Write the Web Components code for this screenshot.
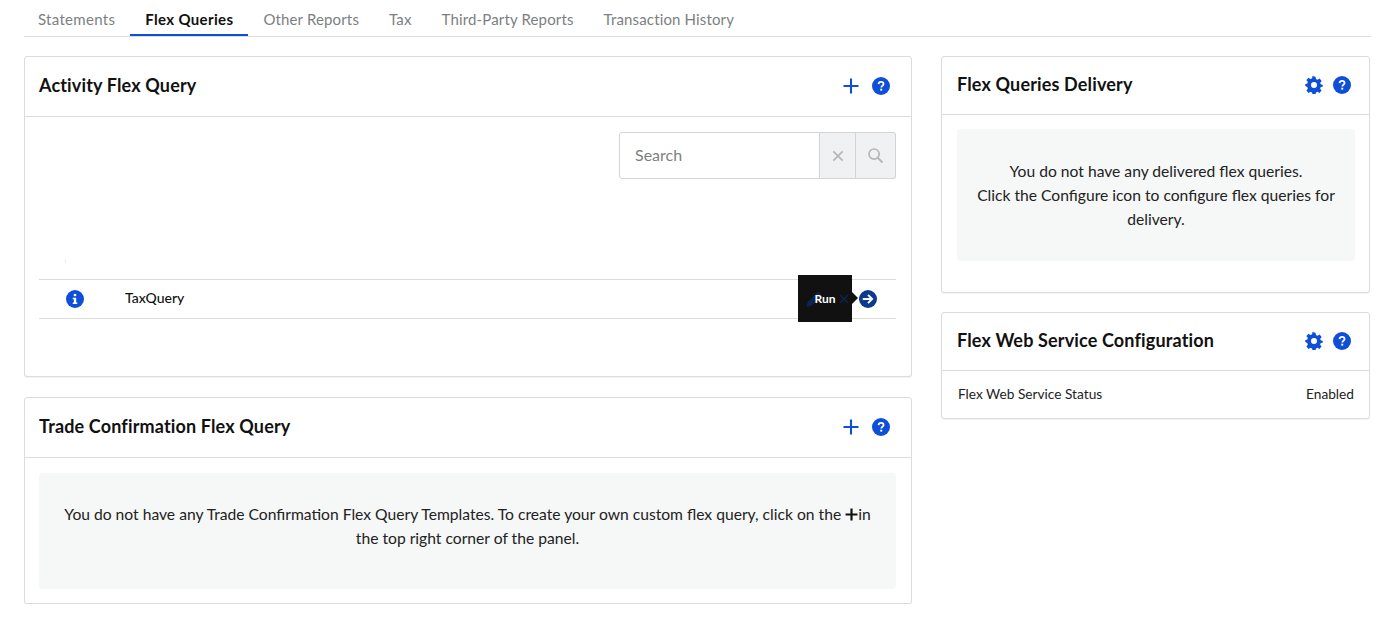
<!DOCTYPE html>
<html lang="en">
<head>
<meta charset="utf-8">
<title>Flex Queries</title>
<style>
  html, body { margin: 0; background: #fff; }
  body { font-family: Lato, "Open Sans", sans-serif; color: #1c1c1c; }
</style>
</head>
<body>
<fq-page>
  <fq-tabs slot="tabs">
    <fq-tab>Statements</fq-tab>
    <fq-tab active>Flex Queries</fq-tab>
    <fq-tab>Other Reports</fq-tab>
    <fq-tab>Tax</fq-tab>
    <fq-tab>Third-Party Reports</fq-tab>
    <fq-tab>Transaction History</fq-tab>
  </fq-tabs>

  <fq-card slot="left" heading="Activity Flex Query" action="plus" style="height:321px">
    <fq-search></fq-search>
    <fq-row name="TaxQuery"></fq-row>
  </fq-card>
  <fq-card slot="left" heading="Trade Confirmation Flex Query" action="plus" style="height:207px">
    <fq-notice style="height:116px;padding-bottom:10px">You do not have any Trade Confirmation Flex Query Templates. To create your own custom flex query, click on the <fq-icon name="plusbold" size="13" style="color:#111;vertical-align:-1px"></fq-icon><span>in</span> the top right corner of the panel.</fq-notice>
  </fq-card>

  <fq-card slot="right" heading="Flex Queries Delivery" action="gear" compact style="height:237px">
    <fq-notice style="height:132px;padding:0 18px;margin-top:-1px">You do not have any delivered flex queries.<br>Click the Configure icon to configure flex queries for delivery.</fq-notice>
  </fq-card>
  <fq-card slot="right" heading="Flex Web Service Configuration" action="gear" compact flush style="height:107px">
    <fq-status label="Flex Web Service Status" value="Enabled"></fq-status>
  </fq-card>
</fq-page>

<script>
const ICONS = {
  plus: '<path d="M12 2v20M2 12h20" fill="none" stroke="currentColor" stroke-width="2.8"/>',
  plusbold: '<path d="M12 1v22M1 12h22" fill="none" stroke="currentColor" stroke-width="4"/>',
  help: '<circle cx="12" cy="12" r="12" fill="currentColor"/><path d="M8.7 9.4c.2-2 1.6-3 3.4-3 1.9 0 3.3 1.1 3.3 2.8 0 2.5-3 2.5-3 4.8" fill="none" stroke="#fff" stroke-width="2.3"/><rect x="11" y="15.6" width="2.6" height="2.6" fill="#fff"/>',
  info: '<circle cx="12" cy="12" r="12" fill="currentColor"/><rect x="10.4" y="5.2" width="3.2" height="3" fill="#fff"/><path d="M9 10.2h4.6v6.6H15v2H9v-2h1.5v-4.6H9z" fill="#fff"/>',
  gear: '<path fill="currentColor" fill-rule="evenodd" d="M14 1l.6 3 2.2.9 2.6-1.7 2.9 3.5-2 2.2.6 2.2 2.9 1-.1 1.8-2.9 1-.6 2.1 1.9 2.4-2.9 3.3-2.5-1.7-2.1.9-.6 3h-4l-.6-3-2.1-.9-2.6 1.7-2.8-3.4 1.9-2.3-.6-2.1L.3 13l-.1-2 2.9-1 .6-2.2-1.9-2.3 2.8-3.3 2.6 1.7 2.2-.9.6-3zM12 8a4 4 0 1 0 0 8 4 4 0 0 0 0-8z"/>',
  close: '<path d="M4 4l16 16M20 4L4 20" fill="none" stroke="currentColor" stroke-width="2.8"/>',
  search: '<circle cx="10" cy="10" r="7.2" fill="none" stroke="currentColor" stroke-width="2.4"/><path d="M15.2 15.2l6.6 6.6" fill="none" stroke="currentColor" stroke-width="2.8"/>',
  pencil: '<path fill="currentColor" d="M2 23l1.5-7L16 3.5a2 2 0 0 1 3 0l2 2a2 2 0 0 1 0 3L8.5 21z"/>',
  run: '<circle cx="12" cy="12" r="12" fill="currentColor"/><path d="M5 12h12M12 6.5l5.5 5.5-5.5 5.5" fill="none" stroke="#fff" stroke-width="2.6"/>'
};

class FqIcon extends HTMLElement {
  connectedCallback() {
    const size = this.getAttribute('size') || 18;
    this.attachShadow({ mode: 'open' }).innerHTML = `
      <style>
        :host { display: inline-block; width: ${size}px; height: ${size}px; line-height: 0; }
        svg { width: 100%; height: 100%; display: block; }
      </style>
      <svg viewBox="0 0 24 24">${ICONS[this.getAttribute('name')]}</svg>`;
  }
}

class FqPage extends HTMLElement {
  constructor() {
    super();
    this.attachShadow({ mode: 'open' }).innerHTML = `
      <style>
        :host { display: block; padding: 0 29px 0 24px; }
        .cols { display: grid; grid-template-columns: 888px 429px; column-gap: 29px; margin-top: 19px; }
        .col { display: flex; flex-direction: column; gap: 20px; }
        .col.right { gap: 19px; }
      </style>
      <slot name="tabs"></slot>
      <div class="cols">
        <div class="col"><slot name="left"></slot></div>
        <div class="col right"><slot name="right"></slot></div>
      </div>`;
  }
}

class FqTabs extends HTMLElement {
  constructor() {
    super();
    this.attachShadow({ mode: 'open' }).innerHTML = `
      <style>
        :host { display: flex; height: 37px; box-sizing: border-box; border-bottom: 1px solid #dcdcdc; }
      </style>
      <slot></slot>`;
  }
}

class FqTab extends HTMLElement {
  constructor() {
    super();
    this.attachShadow({ mode: 'open' }).innerHTML = `
      <style>
        :host {
          display: block; height: 36px; box-sizing: border-box; padding: 9px 15px 0;
          font-size: 15px; line-height: 20px; color: #7c7f82; white-space: nowrap; letter-spacing: .15px;
        }
        :host(:first-child) { padding: 9px 15px 0 14px; letter-spacing: .3px; }
        :host([active]) { color: #111; font-weight: 700; letter-spacing: .35px; border-bottom: 2px solid #0f4fd8; }
      </style>
      <slot></slot>`;
  }
}

class FqCard extends HTMLElement {
  connectedCallback() {
    const action = this.getAttribute('action');
    this.attachShadow({ mode: 'open' }).innerHTML = `
      <style>
        :host {
          display: flex; flex-direction: column; box-sizing: border-box;
          border: 1px solid #dcdcdc; border-radius: 3px; background: #fff;
          box-shadow: 0 1px 1px rgba(0,0,0,.05);
        }
        header {
          flex: none; height: 59px; display: flex; align-items: center;
          padding: 0 21px 0 14px; border-bottom: 1px solid #dcdcdc;
        }
        :host([compact]) header { height: 57px; padding: 0 18px 0 15px; }
        h2 { flex: 1; margin: 0 0 3px; font-size: 18px; font-weight: 700; color: #111; letter-spacing: .15px; }
        .tools { display: flex; align-items: center; gap: 12px; color: #0f4fd8; margin-bottom: 1px; }
        :host([compact]) .tools { gap: 10px; }
        .body { flex: 1; padding: 15px 15px 0 14px; position: relative; }
        :host([compact]) .body { padding: 15px 14px 0 15px; }
        :host([flush]) .body { padding: 0; }
      </style>
      <header>
        <h2>${this.getAttribute('heading')}</h2>
        <div class="tools">
          <fq-icon name="${action}"></fq-icon>
          <fq-icon name="help"></fq-icon>
        </div>
      </header>
      <div class="body"><slot></slot></div>`;
  }
}

class FqSearch extends HTMLElement {
  constructor() {
    super();
    this.attachShadow({ mode: 'open' }).innerHTML = `
      <style>
        :host { display: flex; justify-content: flex-end; height: 47px; font-size: 16px; }
        .field {
          width: 201px; box-sizing: border-box; border: 1px solid #d4d4d4; border-radius: 3px 0 0 3px;
          padding-left: 15px; line-height: 43px; color: #7c7f82;
        }
        .btn {
          width: 36px; box-sizing: border-box; border: 1px solid #d4d4d4; border-left: 0;
          background: #f0f1f2; color: #b4b6b8; display: flex; align-items: center; justify-content: center;
        }
        .btn.last { width: 40px; border-radius: 0 3px 3px 0; }
      </style>
      <div class="field">Search</div>
      <div class="btn"><fq-icon name="close" size="14"></fq-icon></div>
      <div class="btn last"><fq-icon name="search" size="17"></fq-icon></div>`;
  }
}

class FqRow extends HTMLElement {
  connectedCallback() {
    this.attachShadow({ mode: 'open' }).innerHTML = `
      <style>
        :host {
          display: flex; align-items: center; height: 40px; box-sizing: border-box; margin-top: 100px;
          border-top: 1px solid #dcdcdc; border-bottom: 1px solid #dcdcdc; position: relative;
          font-size: 14px; color: #111;
        }
        :host::before {
          content: ""; position: absolute; left: 26px; top: -21px; width: 1px; height: 4px; background: #eee;
        }
        .info { margin-left: 27px; color: #0f4fd8; }
        .name { margin: 0 0 3px 41px; flex: 1; font-weight: 500; }
        .acts { display: flex; align-items: center; margin-right: 19px; color: #0c3a8f; }
        .pencil, .close { position: relative; z-index: 2; color: #0b2450; }
        .pencil { margin-right: 15px; }
        .close { margin-right: 9px; }
        .tip {
          position: absolute; left: 759px; top: -5px; width: 54px; height: 47px;
          color: #fff; font-size: 12px; font-weight: 700;
          display: flex; align-items: center; justify-content: center;
        }
        .tip::before { content: ""; position: absolute; inset: 0; background: #111; z-index: 1; }
        .tip span { position: relative; z-index: 3; }
        .tip::after {
          content: ""; position: absolute; left: 100%; top: 17px;
          border: 6px solid transparent; border-left-color: #111; border-right-width: 0;
        }
      </style>
      <fq-icon class="info" name="info"></fq-icon>
      <span class="name">${this.getAttribute('name')}</span>
      <div class="acts">
        <fq-icon class="pencil" name="pencil"></fq-icon>
        <fq-icon class="close" name="close" size="12"></fq-icon>
        <fq-icon name="run"></fq-icon>
      </div>
      <div class="tip"><span>Run</span></div>`;
  }
}

class FqNotice extends HTMLElement {
  constructor() {
    super();
    this.attachShadow({ mode: 'open' }).innerHTML = `
      <style>
        :host {
          display: flex; align-items: center; justify-content: center; box-sizing: border-box;
          background: #f6f7f7; border-radius: 3px; padding: 0 20px; text-align: center;
          font-size: 15.65px; line-height: 24px; color: #222;
        }
      </style>
      <div><slot></slot></div>`;
  }
}

class FqStatus extends HTMLElement {
  connectedCallback() {
    this.attachShadow({ mode: 'open' }).innerHTML = `
      <style>
        :host {
          display: flex; justify-content: space-between; align-items: center;
          height: 46px; padding: 0 15px 0 16px; font-size: 13.7px; color: #222;
        }
        span { margin-bottom: 1px; }
      </style>
      <span>${this.getAttribute('label')}</span>
      <span>${this.getAttribute('value')}</span>`;
  }
}

customElements.define('fq-icon', FqIcon);
customElements.define('fq-page', FqPage);
customElements.define('fq-tabs', FqTabs);
customElements.define('fq-tab', FqTab);
customElements.define('fq-card', FqCard);
customElements.define('fq-search', FqSearch);
customElements.define('fq-row', FqRow);
customElements.define('fq-notice', FqNotice);
customElements.define('fq-status', FqStatus);
</script>
</body>
</html>
